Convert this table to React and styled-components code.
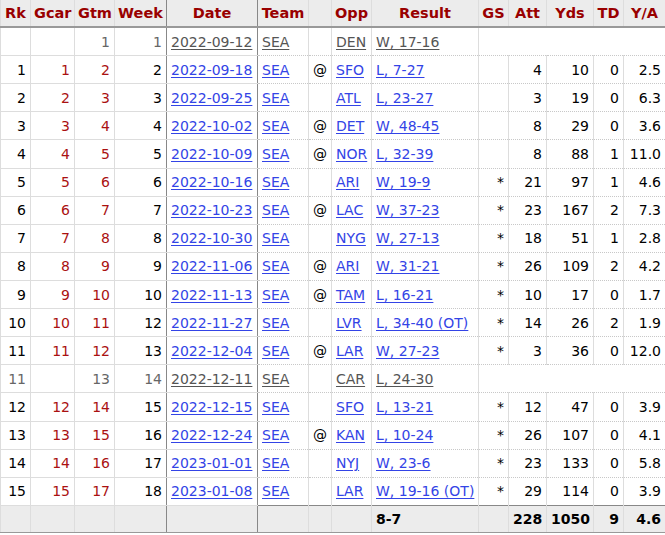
import React from "react";
import styled, { createGlobalStyle } from "styled-components";

const GlobalStyle = createGlobalStyle`
  body {
    margin: 0;
    background: #fff;
    font-family: "DejaVu Sans", Verdana, sans-serif;
  }
`;

const columns = [
  { key: "rk", label: "Rk", width: 30 },
  { key: "gcar", label: "Gcar", width: 44 },
  { key: "gtm", label: "Gtm", width: 40 },
  { key: "week", label: "Week", width: 52 },
  { key: "date", label: "Date", width: 91 },
  { key: "team", label: "Team", width: 51 },
  { key: "at", label: "", width: 23 },
  { key: "opp", label: "Opp", width: 40 },
  { key: "result", label: "Result", width: 107 },
  { key: "gs", label: "GS", width: 30 },
  { key: "att", label: "Att", width: 38 },
  { key: "yds", label: "Yds", width: 47 },
  { key: "td", label: "TD", width: 30 },
  { key: "ya", label: "Y/A", width: 42 }
];

// games the player sat out have no passing line
const games = [
  { inactive: true, rk: "", gcar: "", gtm: 1, week: 1, date: "2022-09-12", at: "", opp: "DEN", result: "W, 17-16" },
  { rk: 1, gcar: 1, gtm: 2, week: 2, date: "2022-09-18", at: "@", opp: "SFO", result: "L, 7-27", gs: "", att: 4, yds: 10, td: 0, ya: "2.5" },
  { rk: 2, gcar: 2, gtm: 3, week: 3, date: "2022-09-25", at: "", opp: "ATL", result: "L, 23-27", gs: "", att: 3, yds: 19, td: 0, ya: "6.3" },
  { rk: 3, gcar: 3, gtm: 4, week: 4, date: "2022-10-02", at: "@", opp: "DET", result: "W, 48-45", gs: "", att: 8, yds: 29, td: 0, ya: "3.6" },
  { rk: 4, gcar: 4, gtm: 5, week: 5, date: "2022-10-09", at: "@", opp: "NOR", result: "L, 32-39", gs: "", att: 8, yds: 88, td: 1, ya: "11.0" },
  { rk: 5, gcar: 5, gtm: 6, week: 6, date: "2022-10-16", at: "", opp: "ARI", result: "W, 19-9", gs: "*", att: 21, yds: 97, td: 1, ya: "4.6" },
  { rk: 6, gcar: 6, gtm: 7, week: 7, date: "2022-10-23", at: "@", opp: "LAC", result: "W, 37-23", gs: "*", att: 23, yds: 167, td: 2, ya: "7.3" },
  { rk: 7, gcar: 7, gtm: 8, week: 8, date: "2022-10-30", at: "", opp: "NYG", result: "W, 27-13", gs: "*", att: 18, yds: 51, td: 1, ya: "2.8" },
  { rk: 8, gcar: 8, gtm: 9, week: 9, date: "2022-11-06", at: "@", opp: "ARI", result: "W, 31-21", gs: "*", att: 26, yds: 109, td: 2, ya: "4.2" },
  { rk: 9, gcar: 9, gtm: 10, week: 10, date: "2022-11-13", at: "@", opp: "TAM", result: "L, 16-21", gs: "*", att: 10, yds: 17, td: 0, ya: "1.7" },
  { rk: 10, gcar: 10, gtm: 11, week: 12, date: "2022-11-27", at: "", opp: "LVR", result: "L, 34-40 (OT)", gs: "*", att: 14, yds: 26, td: 2, ya: "1.9" },
  { rk: 11, gcar: 11, gtm: 12, week: 13, date: "2022-12-04", at: "@", opp: "LAR", result: "W, 27-23", gs: "*", att: 3, yds: 36, td: 0, ya: "12.0" },
  { inactive: true, rk: 11, gcar: "", gtm: 13, week: 14, date: "2022-12-11", at: "", opp: "CAR", result: "L, 24-30" },
  { rk: 12, gcar: 12, gtm: 14, week: 15, date: "2022-12-15", at: "", opp: "SFO", result: "L, 13-21", gs: "*", att: 12, yds: 47, td: 0, ya: "3.9" },
  { rk: 13, gcar: 13, gtm: 15, week: 16, date: "2022-12-24", at: "@", opp: "KAN", result: "L, 10-24", gs: "*", att: 26, yds: 107, td: 0, ya: "4.1" },
  { rk: 14, gcar: 14, gtm: 16, week: 17, date: "2023-01-01", at: "", opp: "NYJ", result: "W, 23-6", gs: "*", att: 23, yds: 133, td: 0, ya: "5.8" },
  { rk: 15, gcar: 15, gtm: 17, week: 18, date: "2023-01-08", at: "", opp: "LAR", result: "W, 19-16 (OT)", gs: "*", att: 29, yds: 114, td: 0, ya: "3.9" }
];

const App = () => (
  <>
    <GlobalStyle />
    <Table>
      <colgroup>
        {columns.map((c) => (
          <col key={c.key} style={{ width: c.width }} />
        ))}
      </colgroup>
      <thead>
        <tr>
          {columns.map((c) => (
            <HeadCell key={c.key} $divider={c.key === "date" || c.key === "team"}>
              {c.label}
            </HeadCell>
          ))}
        </tr>
      </thead>
      <tbody>
        {games.map((g) => (
          <tr key={g.date}>
            <Cell $align="right" $tone={g.inactive ? "muted" : "base"}>{g.rk}</Cell>
            <Cell $align="right" $tone={g.inactive ? "muted" : "red"}>{g.gcar}</Cell>
            <Cell $align="right" $tone={g.inactive ? "muted" : "red"}>{g.gtm}</Cell>
            <Cell $align="right" $tone={g.inactive ? "muted" : "base"}>{g.week}</Cell>
            <Cell $divider>
              <Link $muted={g.inactive}>{g.date}</Link>
            </Cell>
            <Cell $dotted $divider>
              <Link $muted={g.inactive}>SEA</Link>
            </Cell>
            <Cell $dotted $align="center">{g.at}</Cell>
            <Cell $dotted>
              <Link $muted={g.inactive}>{g.opp}</Link>
            </Cell>
            <Cell $dotted>
              <Link $muted={g.inactive}>{g.result}</Link>
            </Cell>
            {g.inactive ? (
              <Cell $dotted colSpan={5} />
            ) : (
              <>
                <Cell $dotted $align="right">{g.gs}</Cell>
                <Cell $dotted $align="right">{g.att}</Cell>
                <Cell $dotted $align="right">{g.yds}</Cell>
                <Cell $dotted $align="right">{g.td}</Cell>
                <Cell $dotted $align="right">{g.ya}</Cell>
              </>
            )}
          </tr>
        ))}
      </tbody>
      <tfoot>
        <tr>
          <FootCell />
          <FootCell />
          <FootCell />
          <FootCell />
          <FootCell $divider />
          <FootCell $divider />
          <FootCell />
          <FootCell />
          <FootCell>8-7</FootCell>
          <FootCell />
          <FootCell $align="right">228</FootCell>
          <FootCell $align="right">1050</FootCell>
          <FootCell $align="right">9</FootCell>
          <FootCell $align="right">4.6</FootCell>
        </tr>
      </tfoot>
    </Table>
  </>
);

const Table = styled.table`
  width: 665px;
  table-layout: fixed;
  border-collapse: collapse;
  font-size: 14px;
  color: #000;
`;

const HeadCell = styled.th`
  height: 26px;
  padding: 0 3px;
  background: #ececec;
  color: #990000;
  font-size: 14.5px;
  font-weight: bold;
  text-align: center;
  white-space: nowrap;
  border-left: 1px solid ${({ $divider }) => ($divider ? "#888" : "#ddd")};
  border-bottom: 2px solid #999;
  &:last-child {
    border-right: 1px solid #ddd;
  }
`;

const toneColor = {
  red: "#aa1111",
  muted: "#666",
  base: "#000"
};

const Cell = styled.td`
  height: 27.12px;
  padding: 0 4px;
  white-space: nowrap;
  text-align: ${({ $align }) => $align || "left"};
  color: ${({ $tone }) => toneColor[$tone] || "#000"};
  border-left: 1px solid ${({ $divider }) => ($divider ? "#888" : "#ddd")};
  border-bottom: 1px ${({ $dotted }) => ($dotted ? "dotted #c8c8c8" : "solid #ddd")};
  &:last-child {
    border-right: 1px solid #ddd;
  }
`;

const Link = styled.span`
  color: ${({ $muted }) => ($muted ? "#555" : "#3344e6")};
  text-decoration: underline;
  text-underline-offset: 2px;
`;

const FootCell = styled.td`
  height: 26px;
  padding: 0 4px;
  background: #ececec;
  font-weight: bold;
  text-align: ${({ $align }) => $align || "left"};
  border-top: 1px solid #888;
  border-bottom: 1px solid #999;
  border-left: 1px solid ${({ $divider }) => ($divider ? "#888" : "#ddd")};
  &:last-child {
    border-right: 1px solid #ddd;
  }
`;

export default App;
